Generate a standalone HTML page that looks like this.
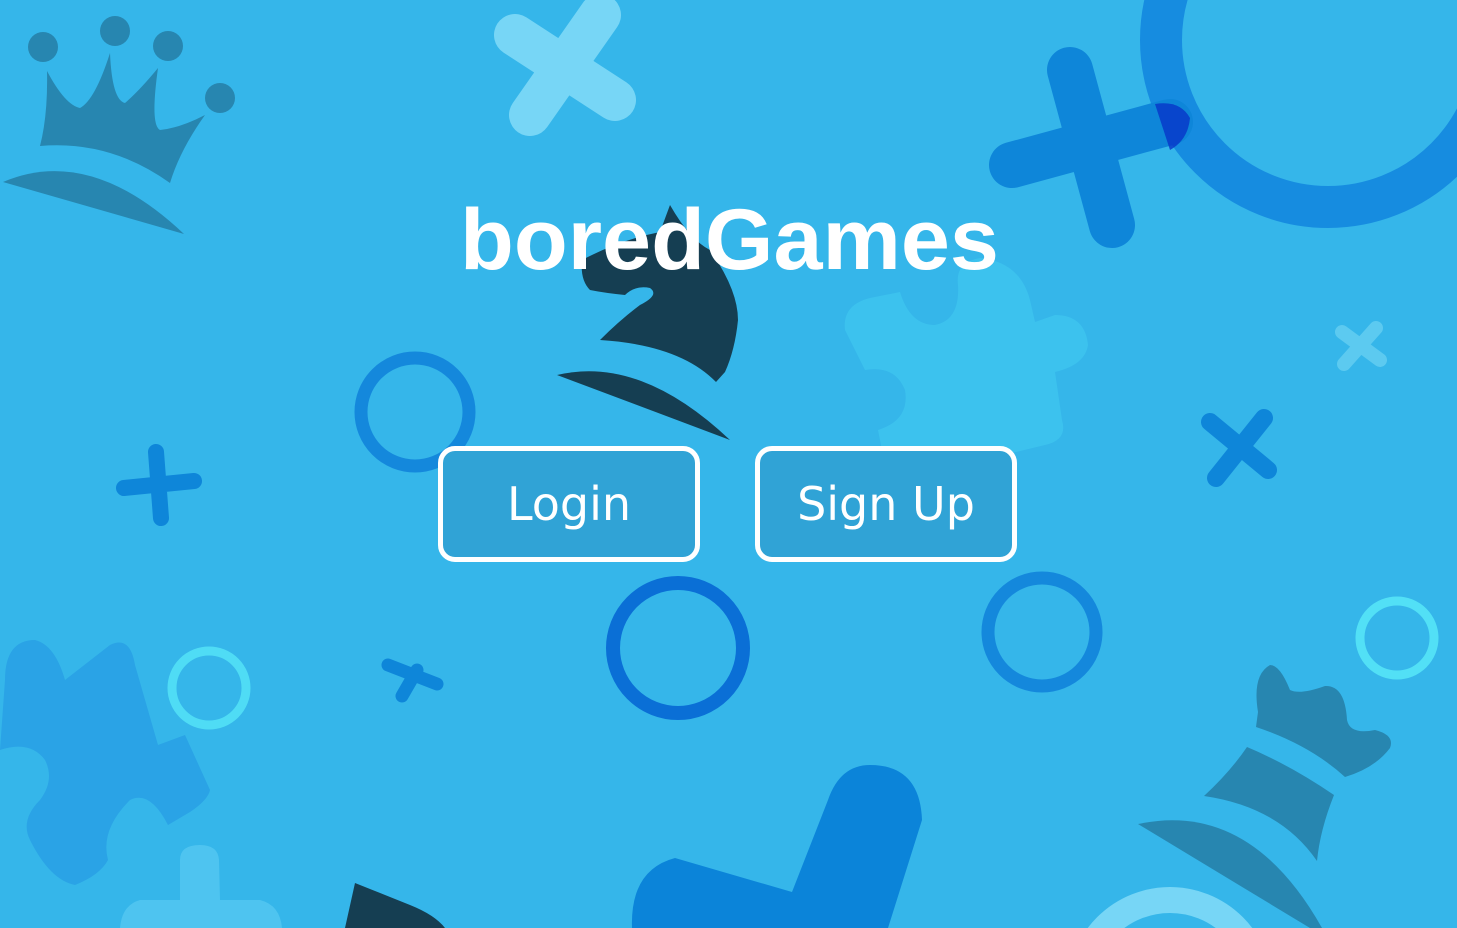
<!DOCTYPE html><html><head><style>
html,body{margin:0;padding:0;width:1457px;height:928px;overflow:hidden;background:#35b6ea}
#w{position:relative;width:1457px;height:928px;overflow:hidden}
.t{position:absolute;left:0;top:190px;width:1457px;text-align:center;font:bold 86px/100px "Liberation Sans",sans-serif;color:#fff;letter-spacing:0px;margin-left:1px;transform:scaleX(1.025)}
.b{position:absolute;top:446px;width:252px;height:106px;border:5px solid #fff;border-radius:17px;background:#30a3d6;color:#fff;font:46px/106px "DejaVu Sans","Liberation Sans",sans-serif;text-align:center;box-sizing:content-box}
</style></head><body><div id="w">
<svg width="1457" height="928" style="position:absolute;left:0;top:0">
<g fill="#2786b0">
<circle cx="43" cy="47" r="15"/><circle cx="115" cy="31" r="15"/><circle cx="168" cy="46" r="15"/><circle cx="220" cy="98" r="15"/>
<path d="M47 71 Q65 105 80 108 Q95 100 110 53 Q112 100 125 103 Q140 90 158 68 Q150 125 160 130 Q180 128 205 115 Q180 150 170 183 Q110 140 40 146 Q48 115 47 71Z"/>
<path d="M3 182 Q90 145 184 234Z"/>
<path d="M1258 712 Q1252 675 1270 665 Q1280 665 1290 690 Q1300 695 1325 686 Q1345 685 1347 720 Q1350 735 1375 730 Q1395 735 1390 748 Q1375 768 1345 777 Q1310 745 1256 727Z"/>
<path d="M1247 747 Q1290 765 1334 795 Q1320 830 1317 861 Q1280 807 1204 796 Q1230 772 1247 747Z"/>
<path d="M1138 824 Q1250 800 1322 928 L1310 928Z"/>
</g>
<g stroke-linecap="round" fill="none">
<path d="M515 35L615 100M600 15L530 115" stroke="#77d6f6" stroke-width="42"/>
<circle cx="1328" cy="40" r="167" stroke="#168ce0" stroke-width="42"/>
<path d="M1070 70L1112 225M1012 165L1170 122" stroke="#0e86d9" stroke-width="46"/>
<circle cx="415" cy="412" r="54" stroke="#1488dc" stroke-width="13"/>
<path d="M156 452L161 518M124 488L194 481" stroke="#0e86d9" stroke-width="16"/>
<path d="M1342 332L1380 360M1376 328L1344 364" stroke="#5ccaf0" stroke-width="14"/>
<path d="M1210 422L1268 470M1264 418L1216 478" stroke="#0e86d9" stroke-width="18"/>
<circle cx="678" cy="648" r="65" stroke="#0a6fd6" stroke-width="14"/>
<circle cx="1042" cy="632" r="54" stroke="#1488dc" stroke-width="13"/>
<circle cx="1397" cy="638" r="37" stroke="#52e0f6" stroke-width="9"/>
<path d="M417 670L402 696M388 665L437 684" stroke="#0e86d9" stroke-width="13"/>
<circle cx="1170" cy="990" r="90" stroke="#77d6f6" stroke-width="26"/>
</g>
<path d="M5 680 Q5 640 35 640 Q55 645 65 680 L110 645 Q130 635 135 665 L158 745 L185 735 L210 790 Q208 800 190 812 L168 825 Q150 790 130 800 Q100 830 108 860 Q100 875 75 885 Q50 880 30 840 Q20 820 40 800 Q55 780 45 760 Q30 740 0 750Z" fill="#2aa3e6"/>
<circle cx="209" cy="688" r="37" fill="none" stroke="#52e0f6" stroke-width="9" opacity=".9"/>
<path d="M180 860 Q180 845 200 845 Q218 845 219 860 L220 900 L260 900 Q280 905 282 928 L120 928 Q122 905 140 900 L180 900Z" fill="#4ec4f0"/>
<path d="M845 330 Q842 305 870 298 L900 292 Q910 325 935 325 Q960 320 958 285 Q955 262 980 258 Q1020 262 1030 300 L1035 322 L1055 315 Q1085 315 1088 345 Q1085 365 1055 372 L1062 420 Q1068 440 1045 445 L900 480 Q885 470 880 440 L878 430 Q910 420 905 390 Q895 365 865 370Z" fill="#3cc2ee"/>
<path d="M355 883 L410 905 Q435 915 445 928 L345 928Z" fill="#153e52"/>
<path d="M870 765 Q920 765 922 820 L888 928 L632 928 Q630 870 675 858 L792 892 L828 800 Q840 765 870 765Z" fill="#0b84d9"/>
<path d="M1155 104 Q1180 100 1190 118 Q1188 140 1170 150 Z" fill="#0734c8" opacity=".8"/>
<g fill="#153e52">
<path d="M670 205 Q690 240 710 250 Q738 290 738 320 Q735 350 725 372 L716 382 Q680 345 600 340 Q620 320 640 305 Q660 295 650 288 Q635 285 625 295 Q605 293 590 290 Q580 280 582 260 Q620 240 660 232Z"/>
<path d="M557 375 Q640 355 730 440Z"/>
</g>
</svg>
<div class="t">boredGames</div>
<div class="b" style="left:438px">Login</div>
<div class="b" style="left:755px">Sign Up</div>
</div></body></html>
